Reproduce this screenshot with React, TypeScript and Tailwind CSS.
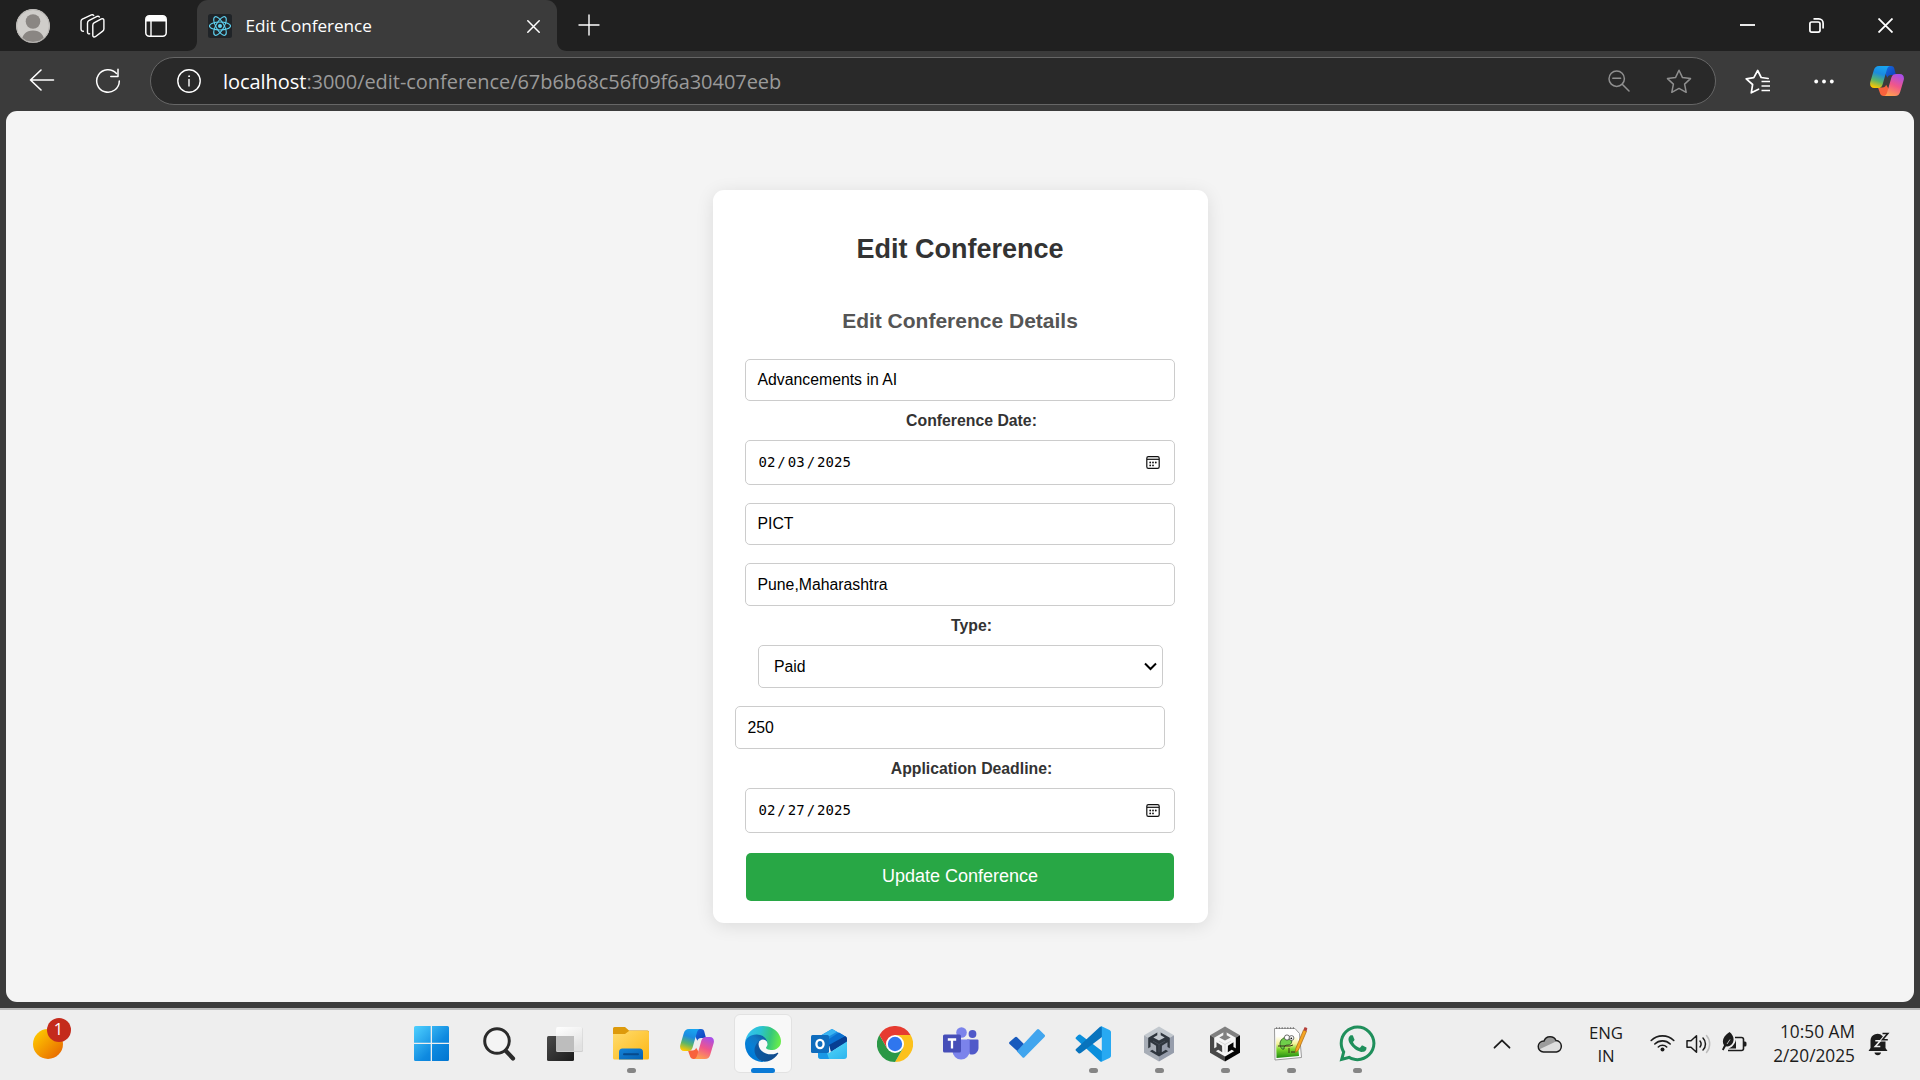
import type { ReactNode } from "react";
import { FaWhatsapp } from "react-icons/fa";

function CopilotIcon({ id }: { id: string }) {
  return (
    <svg width="34" height="30" viewBox="0 0 34 30">
      <defs>
        <linearGradient id={id + "a"} x1="0.6" y1="0" x2="0.3" y2="1">
          <stop offset="0" stopColor="#18a4f0" />
          <stop offset="0.35" stopColor="#1b8be0" />
          <stop offset="0.68" stopColor="#5bb56a" />
          <stop offset="1" stopColor="#ffc800" />
        </linearGradient>
        <linearGradient id={id + "b"} x1="0.7" y1="0" x2="0.3" y2="1">
          <stop offset="0" stopColor="#a94ee8" />
          <stop offset="0.5" stopColor="#f0568a" />
          <stop offset="1" stopColor="#ffa04f" />
        </linearGradient>
        <linearGradient id={id + "c"} x1="0" y1="0" x2="1" y2="1">
          <stop offset="0" stopColor="#1a6fe0" />
          <stop offset="1" stopColor="#0b3bb8" />
        </linearGradient>
      </defs>
      <path d="M15 0h6c1.800 0 2.700.7 3.200 2.300L26 9h-5c-2 0-3 1-3.600 2.800L14 5z" fill={`url(#${id}c)`} />
      <path d="M19 30h-5.500c-1.800 0-2.900-.8-3.400-2.400L8 21.500h4.500c2 0 3-1 3.600-2.800L20 25z" fill="#f8623c" />
      <path d="M9 0h11c-1.800.5-2.500 1.700-3.100 3.600l-4.300 14.800C11.800 21 10.300 22 7.600 22H4.200C.8 22-.5 19.300.3 16L3.700 4.500C4.600 1.500 6 0 9 0z" fill={`url(#${id}a)`} />
      <path d="M25 30H14c1.800-.5 2.500-1.700 3.100-3.600l4.300-14.800C22.200 9 23.700 8 26.400 8h3.400c3.400 0 4.700 2.700 3.900 6l-3.400 11.500c-.9 3-2.300 4.500-5.300 4.500z" fill={`url(#${id}b)`} />
    </svg>
  );
}

function ReactFavicon() {
  return (
    <svg width="24" height="24" viewBox="0 0 24 24" fill="none" stroke="#5fd3f3" strokeWidth="1.100">
      <rect width="24" height="24" rx="2.500" fill="#202428" stroke="none" />
      <ellipse cx="12" cy="12" rx="10.500" ry="4" />
      <ellipse cx="12" cy="12" rx="10.500" ry="4" transform="rotate(60 12 12)" />
      <ellipse cx="12" cy="12" rx="10.500" ry="4" transform="rotate(120 12 12)" />
      <circle cx="12" cy="12" r="2" fill="#5fd3f3" stroke="none" />
    </svg>
  );
}

function TitleBar() {
  return (
    <header className="flex h-[51px] items-center bg-[#202020]">
      <svg className="ml-4" width="34" height="34" viewBox="0 0 34 34">
        <defs>
          <clipPath id="avatarClip"><circle cx="17" cy="17" r="17" /></clipPath>
        </defs>
        <g clipPath="url(#avatarClip)">
          <rect width="34" height="34" fill="#cfcdca" />
          <circle cx="17" cy="12.500" r="7.300" fill="#8a8683" />
          <path d="M5.500 34c0-8 4.500-12.500 11.500-12.500S28.500 26 28.500 34z" fill="#8a8683" />
        </g>
        <circle cx="17" cy="17" r="16.400" fill="none" stroke="#b9b7b4" />
      </svg>
      <svg className="ml-[30px]" width="25" height="24" viewBox="0 0 25 24" fill="none" stroke="#fff" strokeWidth="1.400" strokeLinejoin="round" strokeLinecap="round">
        <path d="M14 8.900 21.400 4.900c1.300-.6 2.500.1 2.500 1.500v8.600c0 .9-.4 1.600-1.200 2.100l-7.400 5.600c-1.200.7-2.500.1-2.500-1.300v-10.200c0-1 .3-1.800 1.200-2.300z" />
        <path d="M9.600 19.800c-1.300.2-2.100-.5-2.100-1.800V9c0-1 .4-1.800 1.300-2.300L17 2.400c.9-.4 1.800-.2 2.300.5" />
        <path d="M3.400 17.200C1.900 17.200 1 16.500 1 15.100V7.300c0-1 .4-1.700 1.300-2.200L11.400.9c1-.4 1.800-.1 2.300.5" />
      </svg>
      <svg className="ml-[40px]" width="22" height="22" viewBox="0 0 22 22">
        <rect x="0.800" y="0.800" width="20.400" height="20.400" rx="3.500" fill="none" stroke="#fff" strokeWidth="1.500" />
        <path d="M1 6.600V4a3 3 0 0 1 3-3h14a3 3 0 0 1 3 3v2.600z" fill="#fff" />
        <path d="M6 6v15" stroke="#fff" strokeWidth="1.400" />
      </svg>
      <svg className="ml-[20px] self-end" width="10" height="10" viewBox="0 0 10 10">
        <path d="M10 0v10H0C6 10 10 6 10 0z" fill="#3b3b3b" />
      </svg>
      <div className="flex h-full w-[360px] items-center rounded-t-[11px] bg-[#3b3b3b] pl-[11px] pr-[17px]">
        <ReactFavicon />
        <span className="ml-[13.5px] pt-px font-['Open_Sans',sans-serif] text-[17.2px] leading-6 tracking-[-0.06px] whitespace-nowrap text-white">Edit Conference</span>
        <svg className="ml-auto mt-px" width="13" height="13" viewBox="0 0 13 13" stroke="#fff" strokeWidth="1.500" strokeLinecap="round">
          <path d="M.8.8l11.400 11.400M12.200.8.8 12.200" />
        </svg>
      </div>
      <svg className="self-end" width="10" height="10" viewBox="0 0 10 10">
        <path d="M0 0v10h10C4 10 0 6 0 0z" fill="#3b3b3b" />
      </svg>
      <svg className="ml-[11px] mb-px" width="22" height="22" viewBox="0 0 22 22" stroke="#fff" strokeWidth="1.400" strokeLinecap="round">
        <path d="M11 1v20M1 11h20" />
      </svg>
      <div className="ml-auto flex items-center gap-[54px] pr-[27px]">
        <svg width="15" height="15" viewBox="0 0 15 15"><path d="M0 7h15" stroke="#fff" strokeWidth="1.800" /></svg>
        <svg width="15" height="15" viewBox="0 0 15 15" fill="none" stroke="#fff" strokeWidth="1.700">
          <rect x="0.900" y="4" width="10.100" height="10.100" rx="1.800" />
          <path d="M4.500.9h5.300a4.300 4.300 0 0 1 4.300 4.300v5.300" />
        </svg>
        <svg width="15" height="15" viewBox="0 0 15 15" stroke="#fff" strokeWidth="1.800"><path d="M.5.5l14 14M14.500.5l-14 14" /></svg>
      </div>
    </header>
  );
}

function Toolbar() {
  return (
    <div className="flex h-[60px] items-center bg-[#3b3b3b]">
      <svg className="ml-[29px] mt-[-2px]" width="26" height="22" viewBox="0 0 26 22" fill="none" stroke="#fff" strokeWidth="1.600" strokeLinecap="round" strokeLinejoin="round">
        <path d="M12 1 1.500 11 12 21M1.500 11H24.500" />
      </svg>
      <svg className="ml-[40px]" width="26" height="26" viewBox="0 0 26 26" fill="none" stroke="#fff" strokeWidth="1.500" strokeLinecap="round" strokeLinejoin="round">
        <path d="M21.500 5.500A11.300 11.300 0 1 0 24.300 13" />
        <path d="M23 1.200v7.200h-7.200" />
      </svg>
      <div className="ml-[29px] flex h-12 w-[1566px] items-center rounded-full border-[1.500px] border-[#666] bg-[#292929] pl-[26px] pr-[23px]">
        <svg width="24" height="24" viewBox="0 0 24 24" fill="none" stroke="#fff" strokeWidth="1.400" strokeLinecap="round">
          <circle cx="12" cy="12" r="11.200" />
          <path d="M12 10.500v6.500" />
          <circle cx="12" cy="7.200" r="0.500" fill="#fff" strokeWidth="0.900" />
        </svg>
        <div className="ml-[22px] pt-px font-['Open_Sans',sans-serif] text-[20px] leading-7 tracking-[-0.045px] whitespace-nowrap text-[#9a9a9a]">
          <span className="text-white">localhost</span>
          <span>:3000/edit-conference/67b6b68c56f09f6a30407eeb</span>
        </div>
        <svg className="ml-auto" width="22" height="22" viewBox="0 0 22 22" fill="none" stroke="#8f8f8f" strokeWidth="1.500" strokeLinecap="round">
          <circle cx="8.700" cy="8.700" r="7.700" />
          <path d="M14.500 14.500 21 21M4.800 8.200h7.800" />
        </svg>
        <svg className="ml-[36px]" width="26" height="25" viewBox="0 0 26 25" fill="none" stroke="#8f8f8f" strokeWidth="1.500" strokeLinejoin="round">
          <path d="M13 1.200l3.500 7.400 8 1-5.900 5.500 1.600 8.200L13 19.400l-7.200 3.900 1.600-8.200L1.500 9.600l8-1z" />
        </svg>
      </div>
      <svg className="ml-[29px]" width="26" height="25" viewBox="0 0 26 25" fill="none" stroke="#fff" strokeWidth="1.700" strokeLinejoin="round" strokeLinecap="round">
        <path d="M13.500 20.200l-7.200 3.600 1.300-8.300L1.200 9.800l7.600-1.200L12.700 1.500l3.500 7 7 1" />
        <path d="M16.500 13h8.500M16.500 17.500h8.500M16.500 22h8.500" transform="translate(0 -.5)" strokeLinecap="butt" />
      </svg>
      <svg className="ml-[43px]" width="20" height="5" viewBox="0 0 20 5" fill="#fff">
        <circle cx="2.200" cy="2.500" r="1.900" /><circle cx="10" cy="2.500" r="1.900" /><circle cx="17.800" cy="2.500" r="1.900" />
      </svg>
      <div className="ml-[36px]"><CopilotIcon id="bar" /></div>
    </div>
  );
}

function Field({ children, className }: { children: ReactNode; className: string }) {
  return (
    <div className={"flex items-center rounded-[5px] border border-[#ccc] bg-white pl-[11.5px] text-[15.8px] leading-5 text-black " + className}>
      {children}
    </div>
  );
}

function Label({ children }: { children: ReactNode }) {
  return <div className="flex h-[39px] items-center justify-center pl-[23px] text-[15.8px] leading-5 font-bold text-[#333]">{children}</div>;
}

function DateField({ m, d, y }: { m: string; d: string; y: string }) {
  return (
    <div className="flex h-[45px] items-center rounded-[5px] border border-[#ccc] bg-white pl-[12.500px] pr-[14px]">
      <div className="flex pb-[2px] font-['DejaVu_Sans_Mono',monospace] text-[14px] leading-5 text-black">
        <span>{m}</span>
        <span className="mx-[2px]">/</span>
        <span>{d}</span>
        <span className="mx-[2px]">/</span>
        <span>{y}</span>
      </div>
      <svg className="ml-auto" width="14" height="13" viewBox="0 0 14 13" fill="none" stroke="#111" strokeWidth="1.200">
        <rect x="0.800" y="0.600" width="12.400" height="11.800" rx="1.600" />
        <path d="M1 3.300h12" />
        <g fill="#111" stroke="none">
          <circle cx="4.200" cy="6.500" r="0.900" /><circle cx="7" cy="6.500" r="0.900" /><circle cx="9.800" cy="6.500" r="0.900" />
          <circle cx="4.200" cy="9.400" r="0.900" /><circle cx="7" cy="9.400" r="0.900" />
        </g>
      </svg>
    </div>
  );
}

function EditCard() {
  return (
    <main className="mt-[79px] flex h-[733px] w-[495px] flex-col rounded-[11px] bg-white pt-[44px] pl-8 pr-[33px] font-['Liberation_Sans',Arial,sans-serif] shadow-[0_3px_18px_rgba(0,0,0,0.1)]">
      <h1 className="text-center text-[27px] leading-[30px] font-bold text-[#333]">Edit Conference</h1>
      <h2 className="mt-[45px] text-center text-[21px] leading-6 font-bold text-[#555]">Edit Conference Details</h2>
      <Field className="mt-[26px] h-[42px] pb-px">Advancements in AI</Field>
      <Label>Conference Date:</Label>
      <DateField m="02" d="03" y="2025" />
      <Field className="mt-[18px] h-[42px] pb-px">PICT</Field>
      <Field className="mt-[18px] h-[43px]">Pune,Maharashtra</Field>
      <Label>Type:</Label>
      <div className="mr-3 ml-[13px] flex h-[43px] items-center justify-between rounded-[5px] border border-[#ccc] pl-[15px] pr-[5px] text-[15.8px] leading-5 text-black">
        <span>Paid</span>
        <svg width="13" height="9" viewBox="0 0 13 9" fill="none" stroke="#000" strokeWidth="2">
          <path d="M1 1.500l5.500 5.500L12 1.500" />
        </svg>
      </div>
      <Field className="mt-[18px] -ml-[10px] mr-[10px] h-[43px]">250</Field>
      <Label>Application Deadline:</Label>
      <DateField m="02" d="27" y="2025" />
      <button className="mx-px mt-5 h-12 rounded-[5px] bg-[#28a745] pb-[3px] text-[18px] leading-5 text-white">Update Conference</button>
    </main>
  );
}

const windowsLogo = (
  <svg width="35" height="35" viewBox="0 0 35 35">
    <defs>
      <linearGradient id="win" gradientUnits="userSpaceOnUse" x1="0" y1="0" x2="35" y2="35">
        <stop offset="0" stopColor="#4fd1ff" /><stop offset="0.600" stopColor="#0f8ae0" /><stop offset="1" stopColor="#0074d0" />
      </linearGradient>
    </defs>
    <path d="M1.500 0H16.700v16.700H0V1.500A1.500 1.500 0 0 1 1.500 0zM18 0h15.500A1.500 1.500 0 0 1 35 1.500v15.200H18zM0 18h16.700v17H1.500A1.500 1.500 0 0 1 0 33.500zM18 18h17v15.500a1.500 1.500 0 0 1-1.500 1.500H18z" fill="url(#win)" />
  </svg>
);

const searchIcon = (
  <svg width="34" height="36" viewBox="0 0 34 36" fill="none" stroke="#2b2b2b">
    <circle cx="15" cy="15" r="12.300" fill="#f4f4f4" strokeWidth="3" />
    <path d="M24 25l7 7.500" strokeWidth="4.200" strokeLinecap="round" />
  </svg>
);

const taskView = (
  <svg width="36" height="34" viewBox="0 0 36 34">
    <defs>
      <linearGradient id="tv" x1="0" y1="0" x2="1" y2="1"><stop offset="0" stopColor="#4a4a4a" /><stop offset="1" stopColor="#1c1c1c" /></linearGradient>
      <linearGradient id="tvw" x1="0" y1="0" x2="0.500" y2="1"><stop offset="0" stopColor="#fff" /><stop offset="1" stopColor="#e2e2e2" /></linearGradient>
    </defs>
    <rect x="0" y="9" width="27" height="25" rx="1.500" fill="url(#tv)" />
    <rect x="9" y="0.500" width="27" height="24.500" rx="1.500" fill="#cfcfcf" />
    <rect x="9" y="0" width="26.500" height="24" rx="1.500" fill="url(#tvw)" />
    <path d="M9 9h18v15H9z" fill="#bdbdbd" />
  </svg>
);

const explorer = (
  <svg width="36" height="34" viewBox="0 0 36 34">
    <defs>
      <linearGradient id="fo" x1="0" y1="0" x2="1" y2="1"><stop offset="0" stopColor="#ffdc6e" /><stop offset="1" stopColor="#fdb714" /></linearGradient>
      <linearGradient id="fb" x1="0" y1="0" x2="1" y2="1"><stop offset="0" stopColor="#1483d8" /><stop offset="1" stopColor="#0560b0" /></linearGradient>
    </defs>
    <path d="M0 1.500A1.500 1.500 0 0 1 1.500 0H12l4 3.500h18.500A1.500 1.500 0 0 1 36 5v6H0z" fill="#dd9a0b" />
    <path d="M0 7h12l4-3h18.500A1.500 1.500 0 0 1 36 5.500V31a1.500 1.500 0 0 1-1.500 1.500h-33A1.500 1.500 0 0 1 0 31z" fill="url(#fo)" />
    <path d="M6 32.500V25a3.500 3.500 0 0 1 3.500-3.500h17A3.500 3.500 0 0 1 30 25v7.500z" fill="url(#fb)" />
    <path d="M11 27.200h14" stroke="#064a8c" strokeWidth="2" strokeLinecap="round" />
  </svg>
);

const edge = (
  <svg width="36" height="36" viewBox="0 0 256 256">
    <defs>
      <linearGradient id="e1" x1="63" y1="178" x2="242" y2="178" gradientUnits="userSpaceOnUse"><stop offset="0" stopColor="#0c59a4" /><stop offset="1" stopColor="#114a8b" /></linearGradient>
      <linearGradient id="e2" x1="157" y1="100" x2="46" y2="221" gradientUnits="userSpaceOnUse"><stop offset="0" stopColor="#0f5fa6" /><stop offset="0.300" stopColor="#1279c4" /><stop offset="0.670" stopColor="#0680d7" /><stop offset="1" stopColor="#0078d4" /></linearGradient>
      <linearGradient id="e3" x1="10" y1="60" x2="250" y2="110" gradientUnits="userSpaceOnUse"><stop offset="0" stopColor="#35c1f1" /><stop offset="0.400" stopColor="#2bc3d2" /><stop offset="0.720" stopColor="#36c77a" /><stop offset="1" stopColor="#66eb4c" /></linearGradient>
    </defs>
    <g transform="translate(-4.630 -4.920)">
      <path fill="url(#e1)" d="M235.680 195.460a93.730 93.730 0 0 1-10.540 4.710 101.870 101.870 0 0 1-35.900 6.460c-47.320 0-88.540-32.550-88.540-74.320A31.480 31.480 0 0 1 117.130 105c-42.800 1.800-53.800 46.400-53.800 72.530 0 73.880 68.090 81.370 82.760 81.370 7.910 0 19.840-2.300 27-4.560l1.310-.44a128.340 128.340 0 0 0 66.600-52.800 4 4 0 0 0-5.320-5.640z" />
      <path fill="url(#e2)" d="M110.340 246.340A79.200 79.200 0 0 1 87.600 225a80.720 80.720 0 0 1 29.530-120c3.120-1.470 8.450-4.130 15.540-4a32.350 32.350 0 0 1 25.690 13 31.880 31.880 0 0 1 6.360 18.660c0-.21 24.460-79.600-80-79.600-43.900 0-80 41.660-80 78.210a130.150 130.150 0 0 0 12.110 56 128 128 0 0 0 156.380 67.110 75.550 75.550 0 0 1-62.780-8z" />
      <path fill="url(#e3)" d="M156.940 153.780c-.81 1.050-3.300 2.500-3.300 5.660 0 2.610 1.700 5.120 4.720 7.230 14.380 10 41.490 8.680 41.560 8.680a59.560 59.560 0 0 0 30.270-8.350 61.380 61.380 0 0 0 30.430-52.880c.26-22.410-8-37.310-11.340-43.910C228.090 28.760 182.350 4.920 132.610 4.920a128 128 0 0 0-128 126.200c.48-36.540 36.800-66.050 80-66.050 3.500 0 23.460.34 42 10.070 16.340 8.580 24.900 18.940 30.850 29.210 6.180 10.670 7.280 24.150 7.280 29.520s-2.740 13.330-7.800 19.910z" />
    </g>
  </svg>
);

const outlook = (
  <svg width="36" height="30" viewBox="0 0 36 30">
    <defs>
      <linearGradient id="ol" x1="0" y1="0" x2="1" y2="1"><stop offset="0" stopColor="#5fe0fb" /><stop offset="1" stopColor="#2cb4ee" /></linearGradient>
    </defs>
    <path d="M7 8 20 .4a2 2 0 0 1 2 0l12.500 7A3 3 0 0 1 36 10v6H7z" fill="#1a8be0" />
    <path d="M10 6.500 20 .4a2 2 0 0 1 2 0l4 2.300L15 9z" fill="#39b4f2" />
    <path d="M18 10 28 3.500l5.500 3.200L18 17z" fill="#0a6fd0" />
    <path d="M18 16 34 7a3 3 0 0 1 2 2.500V13L20 23z" fill="#073f93" />
    <path d="M7 24h11L36 12.500V27a3 3 0 0 1-3 3H10a3 3 0 0 1-3-3z" fill="url(#ol)" />
    <path d="M7 24h9l2 6h-8a3 3 0 0 1-3-3z" fill="#1b98e6" />
    <rect y="6" width="18" height="18" rx="1.500" fill="#0f6cbd" />
    <ellipse cx="9" cy="15" rx="3.600" ry="4.200" fill="none" stroke="#fff" strokeWidth="2.300" />
  </svg>
);

const chrome = (
  <svg width="36" height="36" viewBox="0 0 36 36">
    <path d="M18 9h15.600A18 18 0 0 1 18 36l7.800-13.500z" fill="#fcc11c" />
    <path d="M10.200 22.500 2.400 9A18 18 0 0 0 18 36l7.800-13.500z" fill="#2b9846" />
    <path d="M18 9h15.600A18 18 0 0 0 2.400 9l7.800 13.500z" fill="#e63b30" />
    <circle cx="18" cy="18" r="9" fill="#fff" />
    <circle cx="18" cy="18" r="7.200" fill="#2f76ee" />
  </svg>
);

const teams = (
  <svg width="36" height="33" viewBox="0 0 36 33">
    <circle cx="29.500" cy="7" r="3.900" fill="#5059c9" />
    <path d="M24 12.500h10.500A1 1 0 0 1 35.500 13.500V21a6.500 6.500 0 0 1-9 6z" fill="#5059c9" />
    <circle cx="18.500" cy="5.500" r="5.300" fill="#7b83eb" />
    <path d="M10.500 12.500h15a1.200 1.200 0 0 1 1.200 1.200V24a8.500 8.500 0 0 1-17.200 0z" fill="#7b83eb" />
    <rect y="7.500" width="18" height="18" rx="1.600" fill="#464eb8" />
    <path d="M4.800 12.500h8.400M9 12.500V21.500" stroke="#fff" strokeWidth="2.300" />
  </svg>
);

const todo = (
  <svg width="36" height="29" viewBox="0 0 36 29">
    <path d="M6 8.200a1.500 1.500 0 0 1 2.100 0L21 21l-6.600 6.700L.5 15a1.500 1.500 0 0 1 0-2z" fill="#185abd" />
    <path d="M28 .6a1.500 1.500 0 0 1 2.100 0l5.400 5.200a1.500 1.500 0 0 1 0 2.200L15.500 28.200a1.500 1.500 0 0 1-2.100 0l-5.600-6z" fill="#41a5ee" />
  </svg>
);

const vscode = (
  <svg width="36" height="36" viewBox="0 0 36 36">
    <path d="M1 11.200 3.300 9c.8-.7 1.700-.7 2.500-.1L27 25v10.500c-1 .2-1.800-.1-2.500-.8L1 13c-.6-.6-.6-1.200 0-1.800z" fill="#0b8fdc" />
    <path d="M1 24.800 3.300 27c.8.700 1.700.7 2.500.1L27 11V.5c-1-.2-1.800.1-2.500.8L1 23c-.6.6-.6 1.200 0 1.800z" fill="#0873bd" />
    <path d="M26.500 35.700c-.7.300-1.400.1-2-.5.800.5 2.300.1 2.300-1.300V2.100c0-1.400-1.500-1.800-2.300-1.300.6-.6 1.300-.8 2-.5l8 3.700c.9.500 1.500 1.200 1.500 2.200v23.600c0 1-.6 1.800-1.500 2.200z" fill="#28a9f2" />
  </svg>
);

function UnityIcon({ top, left, right, ink, edge: seam }: { top: string; left: string; right: string; ink: string; edge: string }) {
  const notch = "M14.300 4v5.200l-4 2.300L16 14.600l5.700-3.100-4-2.300V4z";
  return (
    <svg width="32" height="36" viewBox="0 0 32 36">
      <path d="M16 .5 31 9.200 16 18 1 9.200z" fill={top} />
      <path d="M1 9.200 16 18v17.500L1 26.700z" fill={left} />
      <path d="M31 9.200 16 18v17.500l15-8.800z" fill={right} />
      <path d="M16 5.500 26.800 11.800v12.400L16 30.500 5.200 24.200V11.800z" fill={ink} />
      <path d={notch} fill={top} />
      <path d={notch} fill={left} transform="rotate(-120 16 18)" />
      <path d={notch} fill={right} transform="rotate(120 16 18)" />
      <path d="M16 18.500v8M16 18.500l-6-3.400M16 18.500l6-3.400" stroke={seam} strokeWidth="0.800" />
    </svg>
  );
}

const notepad = (
  <svg width="35" height="35" viewBox="0 0 35 35">
    <defs>
      <linearGradient id="np" x1="0" y1="0" x2="0" y2="1"><stop offset="0" stopColor="#fff" /><stop offset="0.350" stopColor="#f6f39a" /><stop offset="0.600" stopColor="#7cd62c" /><stop offset="1" stopColor="#1f8a12" /></linearGradient>
    </defs>
    <path d="M.5 2.500h20.500l4.500 5 2 24L1 34z" fill="#fdfdfd" stroke="#999" />
    <path d="M2 2.200h19" stroke="#777" strokeWidth="1.800" strokeDasharray="1.200 1.600" />
    <path d="M2 10h21.500l1.500 20L2.500 32z" fill="url(#np)" />
    <path d="M6 17c1-5 6-7 10-5 3 2 2 7-2 7-3 0-4 1-4 4-3 1-4-3-4-6z" fill="#6fce4a" stroke="#2a5a20" strokeWidth="0.900" />
    <circle cx="13" cy="11.500" r="2.600" fill="#fff" stroke="#333" strokeWidth="0.700" />
    <circle cx="17.500" cy="12" r="2.400" fill="#fff" stroke="#333" strokeWidth="0.700" />
    <circle cx="17.300" cy="12.300" r="0.900" fill="#111" />
    <path d="M4 20h12l3-1M15 22v5M17 26h4" fill="none" stroke="#3a2a18" strokeWidth="1" />
    <path d="M29.500 4 32.500 5.300 24.500 24 21.500 26.500 21.800 22.500z" fill="#f5a623" stroke="#a86512" strokeWidth="0.700" />
    <path d="M30.300 1.600c.5-1 3.200-.1 3 1.200L32.500 5.300 29.500 4z" fill="#b5403a" />
  </svg>
);

type TaskbarApp = { name: string; icon: ReactNode; running?: boolean; active?: boolean };

const apps: TaskbarApp[] = [
  { name: "Start", icon: <div className="mr-[3px]">{windowsLogo}</div> },
  { name: "Search", icon: searchIcon },
  { name: "Task View", icon: taskView },
  { name: "File Explorer", icon: explorer, running: true },
  { name: "Copilot", icon: <CopilotIcon id="task" /> },
  { name: "Edge", icon: edge, active: true },
  { name: "Outlook", icon: outlook },
  { name: "Chrome", icon: chrome },
  { name: "Teams", icon: teams },
  { name: "To Do", icon: todo },
  { name: "VS Code", icon: vscode, running: true },
  { name: "Unity Hub", icon: <UnityIcon top="#c2c8ce" left="#a7adb6" right="#969dab" ink="#2f363e" edge="#4a525c" />, running: true },
  { name: "Unity", icon: <UnityIcon top="#808080" left="#484848" right="#050505" ink="#f5f5f5" edge="#d0d0d0" />, running: true },
  { name: "Notepad++", icon: notepad, running: true },
  { name: "WhatsApp", icon: <FaWhatsapp size={41} color="#1f8f5b" />, running: true },
];

function Taskbar() {
  return (
    <footer className="flex h-[72px] border-t-2 border-[#bababa] bg-[#eee] font-['Open_Sans',sans-serif] text-[#1c1c1c]">
      <div className="relative mt-[19px] ml-[33px] h-[30px] w-[30px] rounded-full bg-linear-to-br from-[#ffd400] to-[#e35b00]">
        <span className="absolute -top-[11px] left-[13.5px] flex h-6 w-6 items-center justify-center rounded-full bg-[#c42b1c] pb-px text-[16.500px] leading-none text-white">1</span>
      </div>
      <nav className="ml-[337px] flex">
        {apps.map((a) => (
          <div key={a.name} title={a.name} className="flex w-[66px] justify-center pt-1">
            <div className={a.active ? "relative flex h-[59px] w-[58px] items-center justify-center rounded-[6px] border border-[#e2e2e2] bg-[#f8f8f8]" : "relative flex h-[59px] w-[58px] items-center justify-center"}>
              {a.icon}
              {a.running && <span className="absolute bottom-0 left-[24.5px] h-[5px] w-[9px] rounded-full bg-[#858585]" />}
              {a.active && <span className="absolute -bottom-px left-4 h-[5px] w-6 rounded-full bg-[#0a7ad6]" />}
            </div>
          </div>
        ))}
      </nav>
      <div className="ml-auto flex h-[67px] items-center">
        <svg width="18" height="10" viewBox="0 0 18 10" fill="none" stroke="#1c1c1c" strokeWidth="1.800" strokeLinecap="round" strokeLinejoin="round"><path d="M1.500 8.700 9 1.300l7.500 7.400" /></svg>
        <svg className="ml-[26px]" width="26" height="18" viewBox="0 0 26 18">
          <path d="M7 6A6.500 6.500 0 0 1 19 5.500 5.800 5.800 0 0 1 19.500 17H6.500A5.500 5.500 0 0 1 7 6z" fill="#dedede" />
          <path d="M3 14A5.500 5.500 0 0 1 7 6 6.500 6.500 0 0 1 18 4.500l1 2z" fill="#9c9c9c" />
          <path d="M7 6A6.500 6.500 0 0 1 19 5.500 5.800 5.800 0 0 1 19.500 17H6.500A5.500 5.500 0 0 1 7 6z" fill="none" stroke="#1c1c1c" strokeWidth="1.500" />
        </svg>
        <div className="ml-[25px] flex w-9 flex-col items-center text-[16.800px] leading-[23px] tracking-[-0.1px]">
          <span>ENG</span>
          <span>IN</span>
        </div>
        <svg className="ml-[26px] mb-px" width="25" height="18" viewBox="0 0 25 18" fill="none" stroke="#1c1c1c" strokeWidth="1.600" strokeLinecap="round">
          <path d="M1.200 6.500a16 16 0 0 1 22.600 0M4.800 10a11 11 0 0 1 15.400 0M8.300 13a6 6 0 0 1 8.400 0" />
          <circle cx="12.500" cy="15.600" r="2" fill="#1c1c1c" stroke="none" />
        </svg>
        <svg className="ml-[11px]" width="25" height="20" viewBox="0 0 25 20" fill="none" stroke="#1c1c1c" strokeWidth="1.500" strokeLinecap="round" strokeLinejoin="round">
          <path d="M1 6.800h4L10.500 1.800v16.400L5 13.200H1z" />
          <path d="M14 7a5 5 0 0 1 0 6M17 4a8.500 8.500 0 0 1 0 12" />
          <path d="M20.500 1.500a13 13 0 0 1 0 17" stroke="#bdbdbd" />
        </svg>
        <svg className="ml-[11px] mb-1" width="25" height="20" viewBox="0 0 25 20">
          <path d="M13 5.500h6.500A2 2 0 0 1 21.500 7.500v9a2 2 0 0 1-2 2H6" fill="none" stroke="#1c1c1c" strokeWidth="1.600" />
          <path d="M21.500 9.500h1.500a1.500 1.500 0 0 1 1.500 1.500v2a1.500 1.500 0 0 1-1.500 1.500h-1.500zM14 7.500v9H6.500C10 15.500 13 12 14 7.500z" fill="#1c1c1c" />
          <path d="M7.500 0C11.500 3 13 8 10 12c-1.500 2-4 2.800-6 2.200L1.500 18.500 0 17.500l2-4.300C-.7 9 1.500 4 7.500 0z" fill="#1c1c1c" />
          <path d="M5 12 8 7.500" stroke="#eee" strokeWidth="0.800" />
        </svg>
        <div className="ml-[22px] flex w-[86px] flex-col items-end text-[17.300px] leading-6">
          <span>10:50 AM</span>
          <span>2/20/2025</span>
        </div>
        <svg className="ml-[13px] mr-[30px]" width="22" height="24" viewBox="0 0 22 24">
          <path d="M2.500 16V8.500a7 7 0 0 1 12-4.500l3 5v7l2 3H.5z" fill="#1c1c1c" />
          <path d="M6.500 20.500h6.500a3.300 3.300 0 0 1-6.500 0z" fill="#1c1c1c" />
          <path d="M7.300 8.700h5L7.300 14.500h5" fill="none" stroke="#eee" strokeWidth="1.600" />
          <path d="M14.500 1.500h5.300l-5.300 6.300h5.300" fill="none" stroke="#eee" strokeWidth="3.600" />
          <path d="M14.500 1.500h5.300l-5.300 6.300h5.300" fill="none" stroke="#1c1c1c" strokeWidth="1.600" />
        </svg>
      </div>
    </footer>
  );
}

export default function App() {
  return (
    <div className="flex h-[1080px] w-[1920px] flex-col overflow-hidden bg-[#3b3b3b]">
      <TitleBar />
      <Toolbar />
      <div className="mr-[6px] ml-[6px] flex h-[891px] flex-col rounded-[11px] bg-[#f4f4f4] pl-[707px]">
        <EditCard />
      </div>
      <div className="h-[6px]" />
      <Taskbar />
    </div>
  );
}
